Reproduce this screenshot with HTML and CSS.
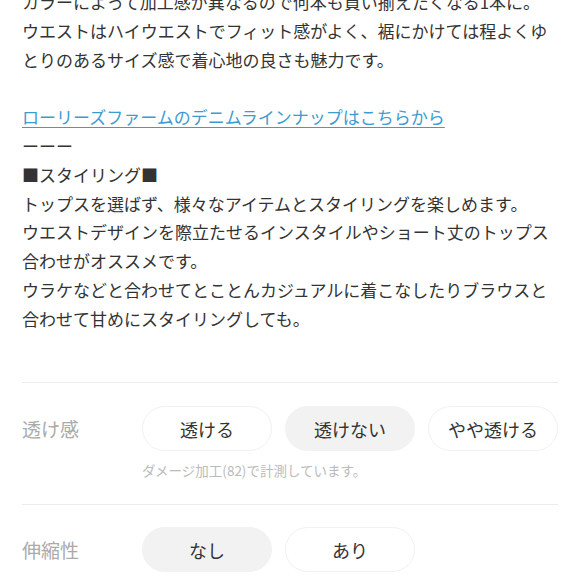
FILE: index.html
```html
<!DOCTYPE html>
<html lang="ja">
<head>
    <meta charset="UTF-8">
    <meta name="viewport" content="width=device-width, initial-scale=1.0">
    <title>商品詳細</title>
    <link rel="stylesheet" href="styles.css">
</head>
<body>

    <div class="detail">
        <p class="desc">
            カラーによって加工感が異なるので何本も買い揃えたくなる1本に。<br>
            ウエストはハイウエストでフィット感がよく、裾にかけては程よくゆ<br>
            とりのあるサイズ感で着心地の良さも魅力です。<br>
            <br>
            <a href="#" class="desc-link">ローリーズファームのデニムラインナップはこちらから</a><br>
            ーーー<br>
            ■スタイリング■<br>
            トップスを選ばず、様々なアイテムとスタイリングを楽しめます。<br>
            ウエストデザインを際立たせるインスタイルやショート丈のトップス<br>
            合わせがオススメです。<br>
            ウラケなどと合わせてとことんカジュアルに着こなしたりブラウスと<br>
            合わせて甘めにスタイリングしても。<br>
            <br>
        </p>

        <div class="spec">
            <div class="spec-row">
                <span class="spec-label">透け感</span>
                <ul class="spec-options">
                    <li>透ける</li>
                    <li class="active">透けない</li>
                    <li>やや透ける</li>
                </ul>
            </div>
            <p class="spec-note">ダメージ加工(82)で計測しています。</p>
        </div>

        <div class="spec">
            <div class="spec-row">
                <span class="spec-label">伸縮性</span>
                <ul class="spec-options">
                    <li class="active">なし</li>
                    <li>あり</li>
                </ul>
            </div>
        </div>
    </div>

</body>
</html>
```

FILE: styles.css
```css
body {
    font-family: "Noto Sans CJK JP", "Noto Sans", sans-serif;
    margin: 0;
    background-color: #fff;
    color: #333;
    overflow: hidden;
}

.detail {
    padding: 0 22px;
}

.desc {
    margin: -12px 0 0;
    font-size: 17px;
    line-height: 28.8px;
}

.desc-link {
    color: #3d9bd0;
    text-decoration: underline;
    text-underline-offset: 3px;
    text-decoration-thickness: 1px;
}

.spec {
    margin-top: 20px;
    border-top: 1px solid #ececec;
    padding: 23px 0 0;
}

.spec + .spec {
    margin-top: 0;
    padding-top: 22px;
}

.spec-row {
    display: flex;
    align-items: center;
}

.spec-label {
    width: 120px;
    flex-shrink: 0;
    font-size: 19px;
    color: #aaa;
}

.spec-options {
    display: flex;
    gap: 13px;
    list-style: none;
    margin: 0;
    padding: 0;
}

.spec-options li {
    width: 130px;
    height: 45px;
    box-sizing: border-box;
    border: 1px solid #f1f1f1;
    border-radius: 23px;
    display: flex;
    align-items: center;
    justify-content: center;
    font-size: 18px;
    color: #333;
}

.spec-options li.active {
    background-color: #f2f2f2;
    border-color: #f2f2f2;
}

.spec-note {
    margin: 10px 0 0 120px;
    padding-bottom: 24px;
    font-size: 13.5px;
    line-height: 19px;
    color: #bbb;
}
```
